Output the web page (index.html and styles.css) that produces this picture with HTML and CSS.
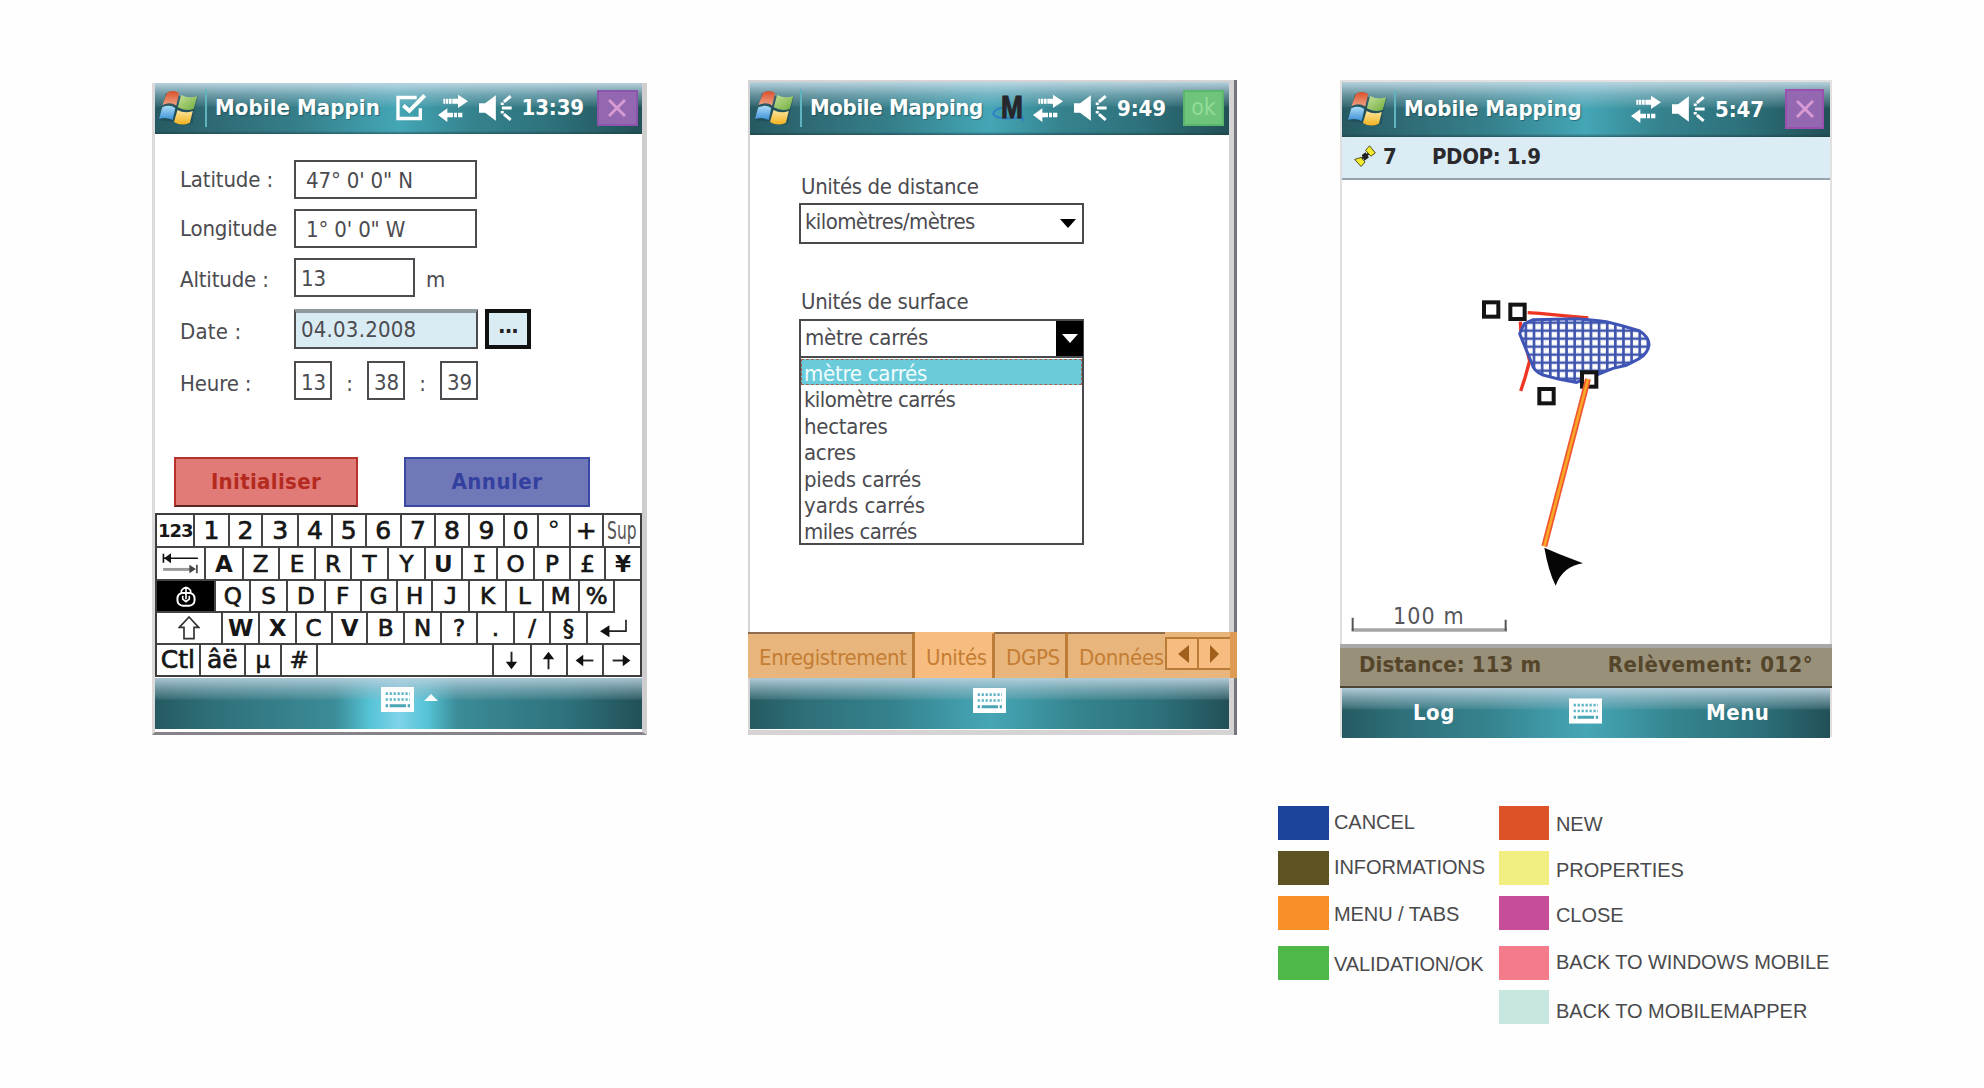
FILE: index.html
```html
<!DOCTYPE html>
<html lang="fr">
<head>
<meta charset="utf-8">
<title>Mobile Mapping</title>
<link rel="stylesheet" href="styles.css">
</head>
<body>
<svg class="defs" width="0" height="0">
  <defs>
    <linearGradient id="fr" x1="0" y1="0" x2="0" y2="1"><stop offset="0" stop-color="#d9502c"/><stop offset="1" stop-color="#f0a283"/></linearGradient>
    <linearGradient id="fg" x1="0" y1="0" x2="1" y2="1"><stop offset="0" stop-color="#c5e09a"/><stop offset="1" stop-color="#6fae3c"/></linearGradient>
    <linearGradient id="fb" x1="0" y1="0" x2="0" y2="1"><stop offset="0" stop-color="#a9dcf8"/><stop offset="1" stop-color="#3b8fd6"/></linearGradient>
    <linearGradient id="fy" x1="0" y1="0" x2="0" y2="1"><stop offset="0" stop-color="#fbe6a0"/><stop offset="1" stop-color="#f3b21c"/></linearGradient>
    <symbol id="flag" viewBox="0 0 120 108">
      <path fill="#1d4650" opacity=".55" d="M20 10Q40-4 60 8L56 14Q84 30 120 18L108 62L104 98Q84 114 58 98L0 92L12 50Z"/>
      <path fill="url(#fr)" d="M24 8Q42-5 62 8L53 46Q34 34 11 45Z"/>
      <path fill="url(#fg)" d="M68 14Q92 26 118 17L107 56Q84 66 58 52Z"/>
      <path fill="url(#fb)" d="M10 52Q32 42 50 54L42 91Q22 80 0 88Z"/>
      <path fill="url(#fy)" d="M57 60Q80 73 104 63L95 99Q70 112 46 97Z"/>
    </symbol>
    <symbol id="check" viewBox="0 0 90 80">
      <path fill="none" stroke="#fff" stroke-width="10" d="M62 10H6V73H73V42"/>
      <path fill="none" stroke="#fff" stroke-width="12" d="M22 34L40 50L86 4"/>
    </symbol>
    <symbol id="arrows" viewBox="0 0 90 84">
      <path fill="#fff" d="M16 14h5v15h-5zM23 14h8v15h-8zM33 14h8v15h-8zM43 14h17V2L90 22L60 42V29H43zM0 63L28 43V56H45V70H28V84ZM48 56h9v14h-9zM60 56h13v14h-13z"/>
    </symbol>
    <symbol id="speaker" viewBox="0 0 98 76">
      <path fill="#fff" d="M0 24H18L50 0V76L18 52H0Z"/>
      <path fill="none" stroke="#fff" stroke-width="9" d="M94 3L74 20M68 38H97M74 56L94 73M69 22V29M69 47V54"/>
    </symbol>
    <symbol id="kbd" viewBox="0 0 100 76">
      <rect width="100" height="76" fill="#fff"/>
      <path stroke="#5fb6c6" stroke-width="8" stroke-dasharray="7 5" d="M14 20H88M14 38H88" fill="none"/>
      <path stroke="#4ba5b5" stroke-width="9" stroke-dasharray="7 5 50 5 7" d="M14 57H88" fill="none"/>
    </symbol>
  </defs>
</svg>

<main class="page">
  <div class="phones">
    <section class="phone phone-a">
      <header class="titlebar">
        <svg class="flag"><use href="#flag"/></svg><i class="divider"></i>
        <h1 class="title">Mobile Mappin</h1>
        <svg class="ic-check"><use href="#check"/></svg>
        <svg class="ic-arrows"><use href="#arrows"/></svg>
        <svg class="ic-speaker"><use href="#speaker"/></svg>
        <span class="clock">13:39</span>
        <span class="close"><svg viewBox="0 0 20 20"><path d="M2 2L18 18M18 2L2 18"/></svg></span>
      </header>
      <div class="form">
        <div class="row"><label>Latitude :</label><span class="field wide pad">47° 0' 0" N</span></div>
        <div class="row"><label>Longitude</label><span class="field wide pad">1° 0' 0" W</span></div>
        <div class="row"><label>Altitude :</label><span class="field mid">13</span><span class="unit">m</span></div>
        <div class="row"><label>Date :</label><span class="field wide shaded">04.03.2008</span><span class="more">...</span></div>
        <div class="row"><label>Heure :</label><span class="field hh">13</span><b class="colon">:</b><span class="field hh">38</span><b class="colon">:</b><span class="field hh">39</span></div>
      </div>
      <div class="actions"><span class="btn init">Initialiser</span><span class="btn cancel">Annuler</span></div>
      <div class="keys">
        <div class="krow r1"><kbd class="small">123</kbd><kbd>1</kbd><kbd>2</kbd><kbd>3</kbd><kbd>4</kbd><kbd>5</kbd><kbd>6</kbd><kbd>7</kbd><kbd>8</kbd><kbd>9</kbd><kbd>0</kbd><kbd class="thin">°</kbd><kbd>+</kbd><kbd class="sup"><span>Sup</span></kbd></div>
        <div class="krow r2"><kbd><svg class="k-tab" viewBox="0 0 110 64"><path stroke="#111" stroke-width="5" fill="none" d="M3 2V30M4 16H108"/><path fill="#111" d="M5 16L26 1V31Z"/><path stroke="#999" stroke-width="9" d="M2 50H84"/><path fill="#444" d="M102 49L82 36V62Z"/><path stroke="#444" stroke-width="5" d="M105 36V62"/></svg></kbd><kbd class="bd">A</kbd><kbd>Z</kbd><kbd>E</kbd><kbd>R</kbd><kbd>T</kbd><kbd>Y</kbd><kbd class="bd">U</kbd><kbd class="mono">I</kbd><kbd>O</kbd><kbd>P</kbd><kbd>£</kbd><kbd class="bd">¥</kbd></div>
        <div class="krow r3"><kbd class="caps"><svg class="k-caps" viewBox="0 0 60 64"><path fill="none" stroke="#fff" stroke-width="5" d="M16 22V14Q30-6 44 14V22M30 4V40M20 30V40L30 48L40 40V30"/><rect x="4" y="21" width="52" height="39" rx="16" fill="none" stroke="#fff" stroke-width="6"/></svg></kbd><kbd>Q</kbd><kbd>S</kbd><kbd>D</kbd><kbd>F</kbd><kbd>G</kbd><kbd>H</kbd><kbd class="mono">J</kbd><kbd>K</kbd><kbd>L</kbd><kbd>M</kbd><kbd>%</kbd><kbd class="enter-top"></kbd></div>
        <div class="krow r4"><kbd><svg class="k-shift" viewBox="0 0 66 72"><path fill="none" stroke="#333" stroke-width="5" d="M33 3L62 34H48V68H18V34H4Z"/></svg></kbd><kbd class="bd">W</kbd><kbd class="bd">X</kbd><kbd>C</kbd><kbd class="bd">V</kbd><kbd>B</kbd><kbd>N</kbd><kbd>?</kbd><kbd>.</kbd><kbd>/</kbd><kbd>§</kbd><kbd><svg class="k-enter" viewBox="0 0 80 56"><path fill="none" stroke="#222" stroke-width="5" d="M77 2V36H20"/><path fill="#111" d="M0 36L28 18V54Z"/></svg></kbd></div>
        <div class="krow r5"><kbd>Ctl</kbd><kbd>âë</kbd><kbd>µ</kbd><kbd>#</kbd><kbd></kbd><kbd><svg class="k-arr down" viewBox="0 0 60 60"><use href="#karr"/></svg></kbd><kbd><svg class="k-arr up" viewBox="0 0 60 60"><use href="#karr"/></svg></kbd><kbd><svg class="k-arr left" viewBox="0 0 60 60"><use href="#karr"/></svg></kbd><kbd><svg class="k-arr" viewBox="0 0 60 60"><g id="karr"><path stroke="#222" stroke-width="6" d="M2 30H40"/><path fill="#111" d="M58 30L34 12V48Z"/></g></svg></kbd></div>
      </div>
      <footer class="softbar lit"><svg class="ic-kbd"><use href="#kbd"/></svg><i class="caret"></i></footer>
    </section>

    <section class="phone phone-b">
      <header class="titlebar">
        <svg class="flag"><use href="#flag"/></svg><i class="divider"></i>
        <h1 class="title">Mobile Mapping</h1>
        <span class="ic-m"><svg viewBox="0 0 96 100"><path fill="none" stroke="#2f7fc4" stroke-width="6" d="M30 48Q2 58 4 68Q12 84 60 80T92 88"/></svg><b>M</b></span>
        <svg class="ic-arrows"><use href="#arrows"/></svg>
        <svg class="ic-speaker"><use href="#speaker"/></svg>
        <span class="clock">9:49</span>
        <span class="ok">ok</span>
      </header>
      <div class="units">
        <div class="caption">Unités de distance</div>
        <div class="select"><span class="tight">kilomètres/mètres</span><i class="tri"></i></div>
        <div class="caption second">Unités de surface</div>
        <div class="select open"><span>mètre carrés</span><b class="drop"><i class="tri"></i></b></div>
        <ul class="list">
          <li class="sel">mètre carrés</li>
          <li class="tight">kilomètre carrés</li>
          <li>hectares</li>
          <li>acres</li>
          <li>pieds carrés</li>
          <li class="loose">yards carrés</li>
          <li class="tight">miles carrés</li>
        </ul>
      </div>
      <nav class="tabs"><span class="tab t1">Enregistrement</span><span class="tab t2 active">Unités</span><span class="tab t3">DGPS</span><span class="tab t4">Données</span><span class="pager"><i class="pl"></i><i class="pr"></i></span></nav>
      <footer class="softbar"><svg class="ic-kbd"><use href="#kbd"/></svg></footer>
    </section>

    <section class="phone phone-c">
      <header class="titlebar">
        <svg class="flag"><use href="#flag"/></svg><i class="divider"></i>
        <h1 class="title">Mobile Mapping</h1>
        <svg class="ic-arrows"><use href="#arrows"/></svg>
        <svg class="ic-speaker"><use href="#speaker"/></svg>
        <span class="clock">5:47</span>
        <span class="close"><svg viewBox="0 0 20 20"><path d="M2 2L18 18M18 2L2 18"/></svg></span>
      </header>
      <div class="gps">
        <svg class="sat" viewBox="0 0 68 70"><path stroke="#222" stroke-width="7" d="M20 44L46 26"/><g fill="#f3e92f" stroke="#4a4a18" stroke-width="3"><path d="M36 16L48 2L66 24L52 34Z"/><path d="M2 44L22 38L34 52L22 66Z"/></g><path fill="#222" d="M24 30L36 22L46 38L32 48Z"/></svg>
        <b class="count">7</b><b class="pdop">PDOP: 1.9</b>
      </div>
      <svg class="map" viewBox="37 -273 1464 1392">
        <defs><pattern id="hatch" width="24.4" height="24" patternUnits="userSpaceOnUse" x="601" y="155"><path d="M12 0V24M0 24H25M0 0H25" stroke="#3f55ad" stroke-width="8" fill="none"/></pattern></defs>
        <g fill="none" stroke="#ee3524" stroke-width="10"><path d="M594 125L630 127L700 134L776 141"/><path d="M572 152L574 185L590 230L600 270L586 320L573 360"/></g>
        <path fill="#fff" d="M610 146L740 143Q800 148 830 152L880 165L930 180Q958 198 958 222Q955 246 930 262L890 283L850 292L800 312L740 334L690 325L640 312Q612 302 606 276L588 232L570 188L584 158Z"/>
        <path fill="url(#hatch)" stroke="#3f55b5" stroke-width="9" d="M610 146L740 143Q800 148 830 152L880 165L930 180Q958 198 958 222Q955 246 930 262L890 283L850 292L800 312L740 334L690 325L640 312Q612 302 606 276L588 232L570 188L584 158Z"/>
        <g fill="#fff" stroke="#141414" stroke-width="12"><rect x="463" y="94" width="43" height="43"/><rect x="542" y="101" width="43" height="43"/><rect x="629" y="354" width="43" height="43"/><rect x="757" y="304" width="43" height="43"/></g>
        <path stroke="#f0562f" stroke-width="18" d="M775 324L644 826"/><path stroke="#f9a826" stroke-width="8" d="M775 324L644 826"/>
        <path fill="#060606" d="M644 830L690 850L760 877Q700 885 678 944Q656 900 644 830Z"/>
        <path fill="none" stroke="#a6a6a6" stroke-width="10" d="M66 1077H532"/><path stroke="#555" stroke-width="6" d="M69 1040V1080M528 1046V1080"/>
        <text x="190" y="1060" textLength="212">100 m</text>
      </svg>
      <div class="info"><span>Distance: 113 m</span><span class="bearing">Relèvement: 012°</span></div>
      <footer class="softbar"><b class="left-key">Log</b><svg class="ic-kbd"><use href="#kbd"/></svg><b class="right-key">Menu</b></footer>
    </section>
  </div>

  <div class="legend">
    <ul>
      <li class="g1"><i class="c-cancel"></i><span>CANCEL</span></li>
      <li class="g2"><i class="c-info"></i><span>INFORMATIONS</span></li>
      <li class="g3"><i class="c-menu"></i><span>MENU / TABS</span></li>
      <li class="g4"><i class="c-ok"></i><span>VALIDATION/OK</span></li>
    </ul>
    <ul>
      <li class="h1"><i class="c-new"></i><span>NEW</span></li>
      <li class="h2"><i class="c-prop"></i><span>PROPERTIES</span></li>
      <li class="h3"><i class="c-close"></i><span>CLOSE</span></li>
      <li class="h4"><i class="c-win"></i><span>BACK TO WINDOWS MOBILE</span></li>
      <li class="h5"><i class="c-mm"></i><span>BACK TO MOBILEMAPPER</span></li>
    </ul>
  </div>
</main>
</body>
</html>
```
FILE: styles.css
```css
* { box-sizing: border-box; }
body { margin: 0; background: #fefefe; }
.defs { position: absolute; }
ul, h1 { margin: 0; padding: 0; list-style: none; font-weight: inherit; font-size: inherit; }
i { font-style: normal; display: block; }
svg { display: block; flex: none; }

.page { width: 1984px; height: 1088px; overflow: hidden; padding: 80px 0 0 152px; }
.phones { display: flex; align-items: flex-start; height: 726px; }
.phone {
  display: flex; flex-direction: column; background: #fff; color: #4b4b50;
  font-family: "DejaVu Sans Condensed", "DejaVu Sans", sans-serif; font-stretch: condensed;
  font-size: 22px; white-space: nowrap;
}
.phone-a { width: 495px; height: 652px; margin-top: 3px; border-left: 3px solid #dcdada; border-right: 5px solid #cfcdcd; border-bottom: 3px solid #858288; }
.phone-b { width: 489px; height: 655px; margin-left: 101px; border: solid #d5d3d3; border-width: 2px 8px 5px 2px; position: relative; }
.phone-b::after { content: ""; position: absolute; right: -8px; top: -2px; bottom: -5px; width: 3px; background: #77757c; }
.phone-c { width: 492px; height: 657px; margin-left: 103px; border: solid #e2dfdf; border-width: 2px 2px 0 2px; }

/* title bar */
.titlebar {
  display: flex; align-items: center; flex: none; height: 51px; padding: 0 4.5px 2px 4px; color: #fff; font-weight: bold;
  background:
    linear-gradient(to bottom, rgba(190,216,228,.95) 0, rgba(165,200,213,.55) 22%, rgba(150,190,200,.12) 45%, transparent 48%, transparent 94%, rgba(30,60,66,.6) 100%),
    linear-gradient(to right, #265a62 0, #2f6a74 12%, #35808b 30%, #44a6b6 50%, #35838e 65%, #2d717b 82%, #225057 100%);
}
.phone-b .titlebar { height: 53px; padding: 0 5px 1px 5px; }
.phone-c .titlebar { height: 55px; padding: 0 6px 1px 6px; }
.flag { width: 39px; height: 36px; }
.divider { width: 2px; height: 38px; margin-left: 7px; background: #5fb4c0; }
.phone-b .divider { margin-left: 6px; }
.title { flex: 1; margin-left: 8px; line-height: 34px; letter-spacing: .1px; text-shadow: 1px 1px 1px rgba(20,60,70,.5); }
.phone-b .title { letter-spacing: -.35px; }
.phone-c .title { letter-spacing: 0; }
.ic-check { width: 30px; height: 27px; margin-right: 12px; }
.ic-arrows { width: 30px; height: 28px; margin-right: 11px; }
.ic-speaker { width: 33px; height: 26px; margin-right: 10px; }
.clock { width: 62px; margin-right: 13px; letter-spacing: -.1px; }
.phone-b .clock { width: 49px; margin-right: 17px; }
.phone-c .clock { width: 49px; margin-right: 21px; }
.close { width: 41px; height: 36px; border: 2px solid #8a55ab; background: #9468b0; display: flex; align-items: center; justify-content: center; }
.phone-c .close { width: 39px; height: 40px; border-color: #9b4fae; }
.close svg { width: 20px; height: 20px; }
.close path { stroke: #d99bd3; stroke-width: 2.8; }
.ok { width: 41px; height: 36px; border: 2px solid #5bb76c; background: #6fc47c; color: #93dc98; font-weight: normal; font-size: 23px; line-height: 31px; text-align: center; }
.ic-m { position: relative; width: 32px; height: 34px; margin-right: 9px; }
.ic-m svg { width: 32px; height: 34px; }
.ic-m b { position: absolute; left: 9px; top: 0; font: bold 31px/34px "Liberation Sans", Arial, sans-serif; color: #26272b; transform: scaleX(.85); transform-origin: left; -webkit-text-stroke: 1px #26272b; }

/* position form */
.form { padding: 26px 0 0 25px; height: 323px; letter-spacing: -.15px; }
.row { display: flex; height: 39px; margin-bottom: 10px; line-height: 40px; }
.row:nth-child(3) { margin-bottom: 12px; }
.row:nth-child(3) label, .unit { padding-top: 2px; }
.row:nth-child(4) { height: 40px; margin-bottom: 12px; letter-spacing: .2px; }
.row label { width: 114px; }
.row:nth-child(n+4) label { padding-top: 3px; }
.field { border: 2px solid #4c4c50; line-height: 37px; padding-left: 5px; }
.wide { width: 183px; }
.pad { padding-left: 10px; }
.mid { width: 121px; }
.shaded { width: 184px; background: #d9ebf3; border-top: 4px solid #90999d; line-height: 34px; }
.unit { margin-left: 11px; }
.more { width: 46px; margin-left: 7px; border: 4px solid #111; background: #d9ebf3; text-align: center; font-weight: bold; color: #222; line-height: 26px; letter-spacing: -.8px; }
.hh { width: 38px; line-height: 39px; }
.colon { width: 35px; font-weight: normal; text-align: center; line-height: 46px; }
.actions { display: flex; height: 50px; padding-left: 19px; }
.btn { width: 184px; border: 2px solid #b8322d; background: #e17b78; color: #b52a1f; font-weight: bold; text-align: center; line-height: 46px; letter-spacing: .35px; }
.btn.init { border-bottom-color: #5a2522; }
.btn.cancel { width: 186px; margin-left: 46px; border-color: #3b49a3; background: #7078b7; color: #3440a0; letter-spacing: .5px; }

/* on-screen keyboard */
.keys { margin-top: 6px; height: 164px; border: 2px solid #3e3e3e; color: #161616; display: grid; grid-template-rows: 33px 33px 32px 32px 1fr; }
.krow { display: grid; }
kbd { display: flex; align-items: center; justify-content: center; font: 25px/30px "DejaVu Sans", sans-serif; -webkit-text-stroke: .7px; border-right: 2px solid #444; border-bottom: 2px solid #444; overflow: hidden; min-width: 0; }
kbd:last-child { border-right: 0; }
.krow:not(.r1) kbd { font-size: 23px; }
kbd.mono { font-family: "DejaVu Sans Mono", monospace; }
kbd.bd { font-weight: bold; -webkit-text-stroke: 0; }
kbd.small { font-size: 18px; font-weight: bold; -webkit-text-stroke: 0; letter-spacing: -1px; }
kbd.thin { -webkit-text-stroke: 0; }
kbd.sup { -webkit-text-stroke: 0; color: #555; }
kbd.sup span { transform: scaleX(.62); }
.r1 { grid-template-columns: 116fr 103fr 102fr 107fr 103fr 101fr 107fr 103fr 101fr 107fr 101fr 97fr 100fr 109fr; }
.r2 { grid-template-columns: 149fr 112fr 110fr 109fr 108fr 113fr 110fr 111fr 108fr 109fr 110fr 106fr 102fr; }
.r3 { grid-template-columns: 179fr 105fr 111fr 114fr 108fr 109fr 108fr 110fr 113fr 109fr 110fr 107fr 74fr; }
.r4 { grid-template-columns: 199fr 113fr 109fr 109fr 108fr 110fr 113fr 106fr 113fr 109fr 110fr 158fr; }
.r5 { grid-template-columns: 132fr 136fr 109fr 110fr 530fr 113fr 109fr 109fr 109fr; }
.r5 kbd { border-bottom: 0; }
.r5 kbd:nth-child(-n+2) { font-size: 25px; }
.caps { background: #000; }
.enter-top { border-bottom: 0; }
.k-tab { width: 37px; height: 21px; }
.k-caps { width: 20px; height: 21px; }
.k-shift { width: 22px; height: 24px; }
.k-enter { width: 27px; height: 19px; }
.k-arr { width: 19px; height: 19px; }
.down { transform: rotate(90deg); }
.up { transform: rotate(-90deg); }
.left { transform: rotate(180deg); }

/* bottom command bar */
.softbar {
  position: relative; flex: none; height: 51px; display: flex; justify-content: center; color: #fff;
  background:
    linear-gradient(to bottom, rgba(184,208,222,.95) 0, rgba(160,190,202,.6) 22%, rgba(140,175,185,.25) 40%, transparent 44%),
    linear-gradient(to right, #265a62 0, #2f7079 12%, #35838e 30%, #46a6b6 50%, #35858f 68%, #2d717b 85%, #235058 100%);
}
.softbar.lit {
  margin-top: 1px;
  background:
    linear-gradient(to bottom, rgba(184,208,222,.9) 0, rgba(160,190,202,.55) 22%, rgba(140,175,185,.2) 40%, transparent 44%),
    linear-gradient(to right, #265a62 0, #2f7079 12%, #3b8c98 37%, #55c3d5 44%, #7fd3ea 50%, #55c3d5 56%, #3b8c98 62%, #2d717b 85%, #235058 100%);
}
.ic-kbd { width: 33px; height: 25px; margin-top: 10px; }
.lit .ic-kbd { margin-left: 21px; margin-top: 9px; }
.caret { width: 0; height: 7px; margin: 16px 0 0 10px; border: 7px solid transparent; border-top: 0; border-bottom: 7px solid #fff; }
.softbar b { line-height: 50px; letter-spacing: .5px; }

/* units screen */
.units { height: 497px; padding: 41px 0 0 49px; flex: none; letter-spacing: -.27px; }
.caption { height: 27px; line-height: 21px; padding-left: 2px; letter-spacing: -.35px; }
.caption.second { margin-top: 47px; height: 28px; line-height: 22px; }
.tight { letter-spacing: -.6px; }
.loose { letter-spacing: -.05px; }
.select { position: relative; width: 285px; height: 41px; border: 2px solid #4a4a4e; padding-left: 4px; display: flex; justify-content: space-between; align-items: center; }
.select > span { line-height: 34px; align-self: flex-start; }
.tri { border: 8px solid transparent; border-top: 9px solid #000; border-bottom: 0; margin-right: 6px; }
.select.open { height: 39px; }
.drop { align-self: stretch; width: 27px; background: #000; margin-right: -1px; display: flex; align-items: center; justify-content: center; }
.drop .tri { border-top-color: #fff; margin: 0; }
.list { width: 285px; height: 187px; border: 2px solid #4a4a4e; border-top-width: 0; padding: 1px 0 0 0; }
.list li { height: 26.4px; line-height: 29px; padding-left: 3px; }
.list .sel { background: #6acbda; color: #f2fdff; outline: 1px dashed #a8604e; outline-offset: -1px; }

/* tabs */
.tabs { position: relative; z-index: 1; display: flex; flex: none; height: 46px; margin: 0 -8px 0 -2px; background: #e8b57c; border-right: 7px solid #dd9a52; color: #c47d33; line-height: 47px; letter-spacing: -.35px; }
.tab { border-right: 3px solid #bd7d38; border-top: 2px solid #8f6c4c; padding-left: 11px; flex: none; }
.t1 { width: 167px; } .t2 { width: 80px; } .t3 { width: 73px; } .t4 { width: 97px; border-right: 0; }
.active { background: #f7bd80; border-top-color: #f7bd80; }
.pager { flex: 1; display: flex; margin: 5px 0 8px; border: 2px solid #b97b36; border-right: 0; background: #f7bd80; align-items: center; justify-content: space-around; position: relative; }
.pager::after { content: ""; position: absolute; left: 30px; top: 0; bottom: 0; width: 2px; background: #b97b36; }
.pager i { border: 9px solid transparent; }
.pager .pl { border-right: 11px solid #a0601c; border-left: 0; }
.pager .pr { border-left: 9px solid #a0601c; border-right: 0; }

/* map screen */
.gps { height: 43px; flex: none; background: #dbecf4; border-bottom: 2px solid #96a2ae; display: flex; align-items: center; color: #2a2a2e; padding: 0 0 2px 12px; }
.sat { width: 22px; height: 23px; }
.count { margin-left: 7px; width: 49px; }
.pdop { letter-spacing: -.4px; }
.map { width: 488px; height: 464px; }
.map text { font-size: 69px; fill: #55555a; }
.info { flex: none; height: 44px; margin: 0 -2px; border-top: 4px solid #a9a9aa; border-bottom: 2px solid #4d4433; background: #989079; color: #55452a; font-weight: bold; line-height: 34px; display: flex; justify-content: space-between; padding: 0 19px 0 19px; letter-spacing: .1px; }
.bearing { letter-spacing: .4px; }
.phone-c .softbar { justify-content: flex-start; height: 50px; }
.phone-c .ic-kbd { margin-left: 114px; height: 26px; }
.left-key { margin-left: 71px; width: 42px; }
.right-key { margin-left: 104px; }

/* legend */
.legend { display: flex; margin-left: 1126px; font: 20px/24px "Liberation Sans", Arial, sans-serif; color: #4a4a4c; white-space: nowrap; }
.legend ul { width: 221px; }
.legend li { display: flex; height: 34px; letter-spacing: -.07px; }
.legend i { flex: none; width: 51px; height: 34px; margin-right: 5px; }
.legend ul + ul i { width: 50px; margin-right: 7px; }
.legend span { padding-top: 4px; }
.g2, .h2, .g3, .h3 { margin-top: 11px; }
.g4, .h4 { margin-top: 16px; }
.h5 { margin-top: 10px; }
.legend .g3 span, .legend .g4 span, .legend .h1 span { padding-top: 6px; }
.legend .h2 span, .legend .h3 span { padding-top: 7px; }
.legend .h5 span { padding-top: 9px; }
.c-cancel { background: #1c449b; } .c-info { background: #5d5222; } .c-menu { background: #f89029; } .c-ok { background: #4eb848; }
.c-new { background: #de5227; } .c-prop { background: #f1ef82; } .c-close { background: #c54d9a; } .c-win { background: #f47b8a; } .c-mm { background: #c8e7e1; }
```
